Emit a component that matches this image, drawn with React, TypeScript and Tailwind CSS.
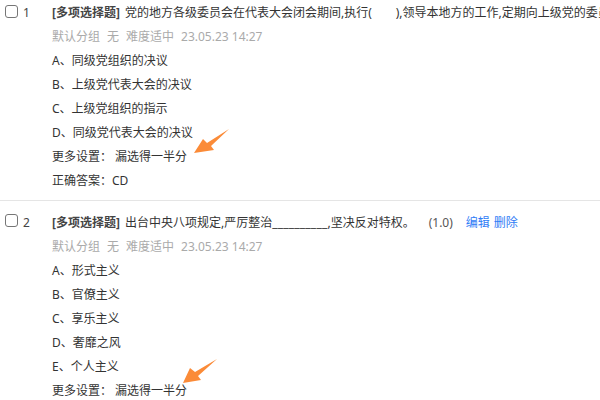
import React from "react";

function Arrow({ points, className }: { points: string; className: string }) {
  return (
    <svg className={className} width="600" height="400" viewBox="0 0 600 400" aria-hidden="true">
      <polygon points={points} fill="#fb8b38" />
    </svg>
  );
}

function Row({ children, className = "" }: { children: React.ReactNode; className?: string }) {
  return <div className={"h-6 leading-6 whitespace-nowrap " + className}>{children}</div>;
}

function Question({
  n,
  title,
  options,
  answer,
  actions,
  boxTop,
  numTop,
}: {
  n: number;
  title: React.ReactNode;
  options: string[];
  answer?: string;
  actions?: boolean;
  boxTop: string;
  numTop: string;
}) {
  return (
    <div className="flex">
      <div className={"w-[52px] shrink-0 flex items-start pl-[5px] " + boxTop}>
        <span className="w-[11px] h-[11px] box-content border border-[#767676] rounded-[3px] bg-white" />
        <span className={"ml-[5px] h-6 leading-6 text-[#444] " + numTop}>{n}</span>
      </div>
      <div className="min-w-0 flex-1">
        <Row>
          <span className="font-bold text-[#444]">[多项选择题]</span>
          <span className="ml-[5px]">{title}</span>
          {actions && (
            <>
              <span className="ml-[14px] text-[#555]">(1.0)</span>
              <a className="ml-[13px] text-[#2f7cf6]">编辑</a>
              <a className="ml-[4px] text-[#2f7cf6]">删除</a>
            </>
          )}
        </Row>
        <Row className="text-[#aaa] flex gap-[7px]">
          <span>默认分组</span>
          <span>无</span>
          <span>难度适中</span>
          <span>23.05.23 14:27</span>
        </Row>
        {options.map((o) => (
          <Row key={o}>{o}</Row>
        ))}
        <Row>
          更多设置：<span className="ml-[3px]">漏选得一半分</span>
        </Row>
        {answer && (
          <Row>
            <span className="text-[#333]">正确答案：{answer}</span>
          </Row>
        )}
      </div>
    </div>
  );
}

export default function App() {
  return (
    <div className="relative w-[600px] h-[400px] overflow-hidden bg-white text-[12px] text-[#333] font-['Noto_Sans','Noto_Sans_CJK_SC',sans-serif]">
      <div className="pt-px pb-[7px] border-b border-[#e5e5e5]">
        <Question
          n={1}
          boxTop="pt-[4px]"
          numTop="-mt-[4px]"
          title="党的地方各级委员会在代表大会闭会期间,执行(&#8195;&#8195;),领导本地方的工作,定期向上级党的委员会报告工作。"
          options={["A、同级党组织的决议", "B、上级党代表大会的决议", "C、上级党组织的指示", "D、同级党代表大会的决议"]}
          answer="CD"
        />
      </div>
      <div className="pt-[10px]">
        <Question
          n={2}
          boxTop="pt-[3px]"
          numTop="-mt-[3px]"
          title={
            <>
              出台中央八项规定,严厉整治<span className="tracking-[0.2px]">__________</span>,坚决反对特权。
            </>
          }
          options={["A、形式主义", "B、官僚主义", "C、享乐主义", "D、奢靡之风", "E、个人主义"]}
          actions
        />
      </div>
      <Arrow
        className="absolute left-0 top-0"
        points="194,153 203,139 207,143 229,129 211,146 214,150"
      />
      <Arrow
        className="absolute left-0 top-0"
        points="183,383 190,368 195,372 217,359 198,376 201,380"
      />
    </div>
  );
}
